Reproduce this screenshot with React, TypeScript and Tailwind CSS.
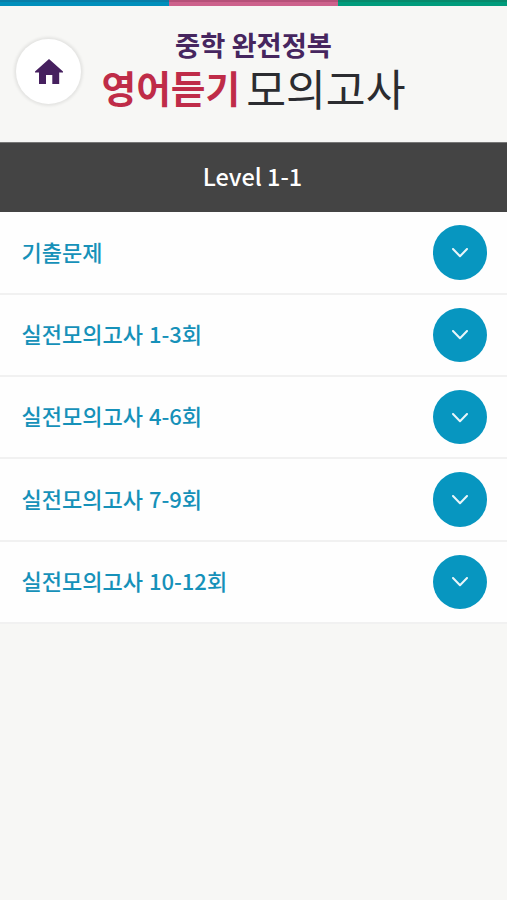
import React from 'react';

const sections = [
  '기출문제',
  '실전모의고사 1-3회',
  '실전모의고사 4-6회',
  '실전모의고사 7-9회',
  '실전모의고사 10-12회',
];

const HomeIcon = () => (
  <svg className="w-7 h-[25px]" viewBox="0 0 28 25" fill="#46205f">
    <path d="M14 0 28 12.5V13.5H24.2V25H17.3V16H11V25H4V13.5H0V12.5Z" />
  </svg>
);

const ChevronIcon = () => (
  <svg className="mt-px w-4 h-[10px]" viewBox="0 0 16 10" fill="none" stroke="#e9f6fa" strokeWidth="2" strokeLinecap="round" strokeLinejoin="round">
    <path d="m1 1 7 7.3L15 1" />
  </svg>
);

const Header: React.FC = () => (
  <header className="h-[136px] flex pl-4 pt-[33px]">
    <button
      className="w-[65px] h-[65px] shrink-0 rounded-full bg-white shadow-[0_0_3px_2px_rgba(0,0,0,0.08)] flex items-center justify-center"
      aria-label="홈"
    >
      <HomeIcon />
    </button>
    <h1 className="-mt-[9px] ml-5 w-[305px] flex flex-col items-center whitespace-nowrap">
      <span className="h-[31px] text-[27.3px] leading-[29px] font-bold text-[#46265f]">중학 완전정복</span>
      <span className="h-[52px] flex items-center leading-[52px]">
        <span className="text-[37.7px] font-bold text-[#bf2c48]">영어듣기</span>
        <span className="ml-1.5 text-[43.3px] font-normal text-[#2b2c30]">모의고사</span>
      </span>
    </h1>
  </header>
);

const SectionRow: React.FC<{ title: string }> = ({ title }) => (
  <li className="h-[82.3px] flex items-center justify-between bg-[#fefefe] border-b-2 border-[#f1f1f1] pl-[21.5px] pr-5">
    <span className="pb-1 text-[22px] leading-8 [word-spacing:1px] font-medium text-[#1691b9]">{title}</span>
    <button className="w-[54.5px] h-[54.5px] rounded-full bg-[#0796c0] flex items-center justify-center" aria-label="펼치기">
      <ChevronIcon />
    </button>
  </li>
);

export default function App() {
  return (
    <div className="w-full h-screen overflow-hidden bg-[#f7f7f5] font-['Noto_Sans_CJK_KR',sans-serif]">
      <div className="h-1.5 grid grid-cols-3">
        <div className="bg-[#008fbb] border-t-2 border-[#087ea8]" />
        <div className="bg-[#cd628c] border-t-2 border-[#b65179]" />
        <div className="bg-[#009c7c] border-t-2 border-[#078a6c]" />
      </div>
      <Header />
      <h2 className="h-[70px] flex items-center justify-center bg-[#444] border-t border-[#777] pb-0.5 pr-0.5 text-[23.5px] font-medium text-white">
        Level 1-1
      </h2>
      <ul className="bg-[#fefefe] pt-[0.5px]">
        {sections.map((title) => (
          <SectionRow key={title} title={title} />
        ))}
      </ul>
    </div>
  );
}
